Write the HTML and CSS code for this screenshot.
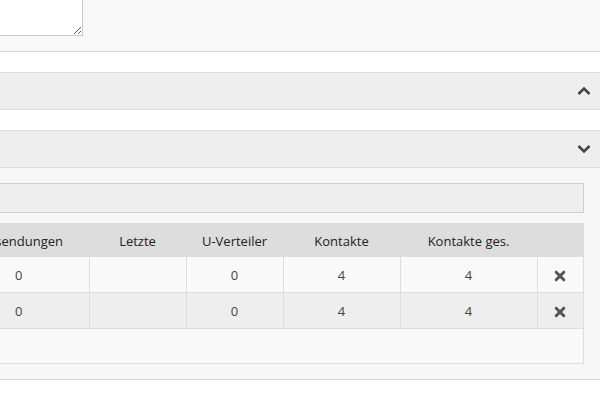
FILE: index.html
```html
<!DOCTYPE html>
<html lang="de">
<head>
<meta charset="utf-8">
<title>Verteiler</title>
<link rel="stylesheet" href="styles.css">
</head>
<body>
<div class="page">
  <div class="top-area">
    <textarea class="note"></textarea>
  </div>

  <div class="panel-head">
    <span class="chev">
      <svg viewBox="0 0 14 10" width="14" height="10"><path d="M1.5 8 L7 2.5 L12.5 8" fill="none" stroke="#444" stroke-width="2.6" stroke-linejoin="miter"/></svg>
    </span>
  </div>

  <div class="panel-head">
    <span class="chev">
      <svg viewBox="0 0 14 10" width="14" height="10"><path d="M1.5 2 L7 7.5 L12.5 2" fill="none" stroke="#444" stroke-width="2.6" stroke-linejoin="miter"/></svg>
    </span>
  </div>
  <div class="panel-body">
    <input class="search" type="text">
    <div class="table-box">
      <table class="grid">
        <thead>
          <tr>
            <th class="c1">Versendungen</th>
            <th class="c2">Letzte</th>
            <th class="c3">U-Verteiler</th>
            <th class="c4">Kontakte</th>
            <th class="c5">Kontakte ges.</th>
            <th class="c6"></th>
          </tr>
        </thead>
        <tbody>
          <tr>
            <td>0</td><td></td><td>0</td><td>4</td><td>4</td>
            <td class="del"><svg viewBox="0 0 12 12" width="12" height="12"><path d="M2.2 2.2 L9.8 9.8 M9.8 2.2 L2.2 9.8" stroke="#555" stroke-width="3" stroke-linecap="round"/></svg></td>
          </tr>
          <tr class="alt">
            <td>0</td><td></td><td>0</td><td>4</td><td>4</td>
            <td class="del"><svg viewBox="0 0 12 12" width="12" height="12"><path d="M2.2 2.2 L9.8 9.8 M9.8 2.2 L2.2 9.8" stroke="#555" stroke-width="3" stroke-linecap="round"/></svg></td>
          </tr>
        </tbody>
      </table>
      <div class="table-foot"></div>
    </div>
  </div>
</div>
</body>
</html>
```

FILE: styles.css
```css
html, body {
  margin: 0;
  padding: 0;
  background: #fff;
  overflow: hidden;
}
body {
  font-family: "Open Sans", "Liberation Sans", sans-serif;
  font-size: 13px;
  color: #333;
}
.page {
  width: 668px;
  margin-left: -68px;
  margin-top: -30px;
}
.top-area {
  background: #f8f8f8;
  padding: 0 16px 15px;
  border-bottom: 1px solid #d6d6d6;
}
.note {
  display: block;
  box-sizing: border-box;
  width: 135px;
  height: 66px;
  margin: 0;
  border: 1px solid #c8c8c8;
  background: #fff;
  resize: both;
}
.panel-head {
  margin-top: 20px;
  height: 36px;
  background: #eeeeee;
  border-top: 1px solid #dcdcdc;
  border-bottom: 1px solid #dcdcdc;
  display: flex;
  align-items: center;
  justify-content: flex-end;
  padding-right: 9px;
}
.chev {
  display: flex;
  width: 14px;
  height: 10px;
}
.panel-body {
  background: #f7f7f7;
  padding: 15px 16px 15px;
  border-bottom: 1px solid #d6d6d6;
}
.search {
  display: block;
  box-sizing: border-box;
  width: 100%;
  height: 30px;
  margin: 0 0 10px;
  border: 1px solid #cfcfcf;
  background: #eeeeee;
}
.table-box {
  border: 1px solid #dddddd;
  background: #f9f9f9;
}
.grid {
  width: 100%;
  border-collapse: collapse;
  table-layout: fixed;
}
.grid th {
  background: #dddddd;
  height: 33px;
  font-weight: normal;
  color: #222;
  text-align: center;
  padding: 0;
  white-space: nowrap;
}
.c1 { width: 140px; }
.c2 { width: 97px; }
.c3 { width: 97px; }
.c4 { width: 117px; }
.c5 { width: 137px; }
.c6 { width: auto; }
.grid td {
  height: 35px;
  padding: 0;
  text-align: center;
  color: #444;
  border-left: 1px solid #dddddd;
  border-bottom: 1px solid #dddddd;
}
.grid td:first-child { border-left: none; }
.grid tr.alt td { background: #eeeeee; }
.del svg { display: inline-block; vertical-align: middle; }
.table-foot {
  height: 34px;
}
```
